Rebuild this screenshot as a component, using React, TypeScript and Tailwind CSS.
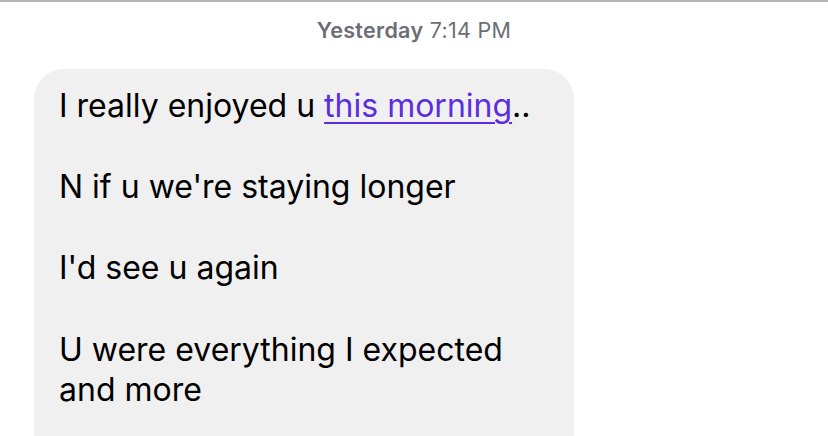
export default function App() {
  const font = { fontFamily: "Inter, 'Noto Sans', sans-serif" };
  return (
    <div
      className="w-[828px] h-[436px] overflow-hidden bg-white border-t-2 border-[#b4b4b4]"
      style={font}
    >
      <div className="pt-[14px] text-center text-[21.5px] leading-[28px] tracking-[0.3px] text-[#6d6d75]">
        <span className="font-semibold">Yesterday</span> 7:14 PM
      </div>
      <div className="pl-[34px] pt-[25px]">
        <div className="w-[540px] h-[420px] rounded-[30px] bg-[#f0f0f0] pl-[25px] pr-[20px] pt-[17px] text-[32px] leading-[40.6px] text-black tracking-[0px]">
          <p>
            I really enjoyed u{" "}
            <span className="text-[#5b2ee0] underline decoration-2 underline-offset-[5px]">
              this morning
            </span>
            ..
          </p>
          <p className="mt-[40.6px]">N if u we're staying longer</p>
          <p className="mt-[40.6px]">I'd see u again</p>
          <p className="mt-[40.6px]">U were everything I expected and more</p>
        </div>
      </div>
    </div>
  );
}
